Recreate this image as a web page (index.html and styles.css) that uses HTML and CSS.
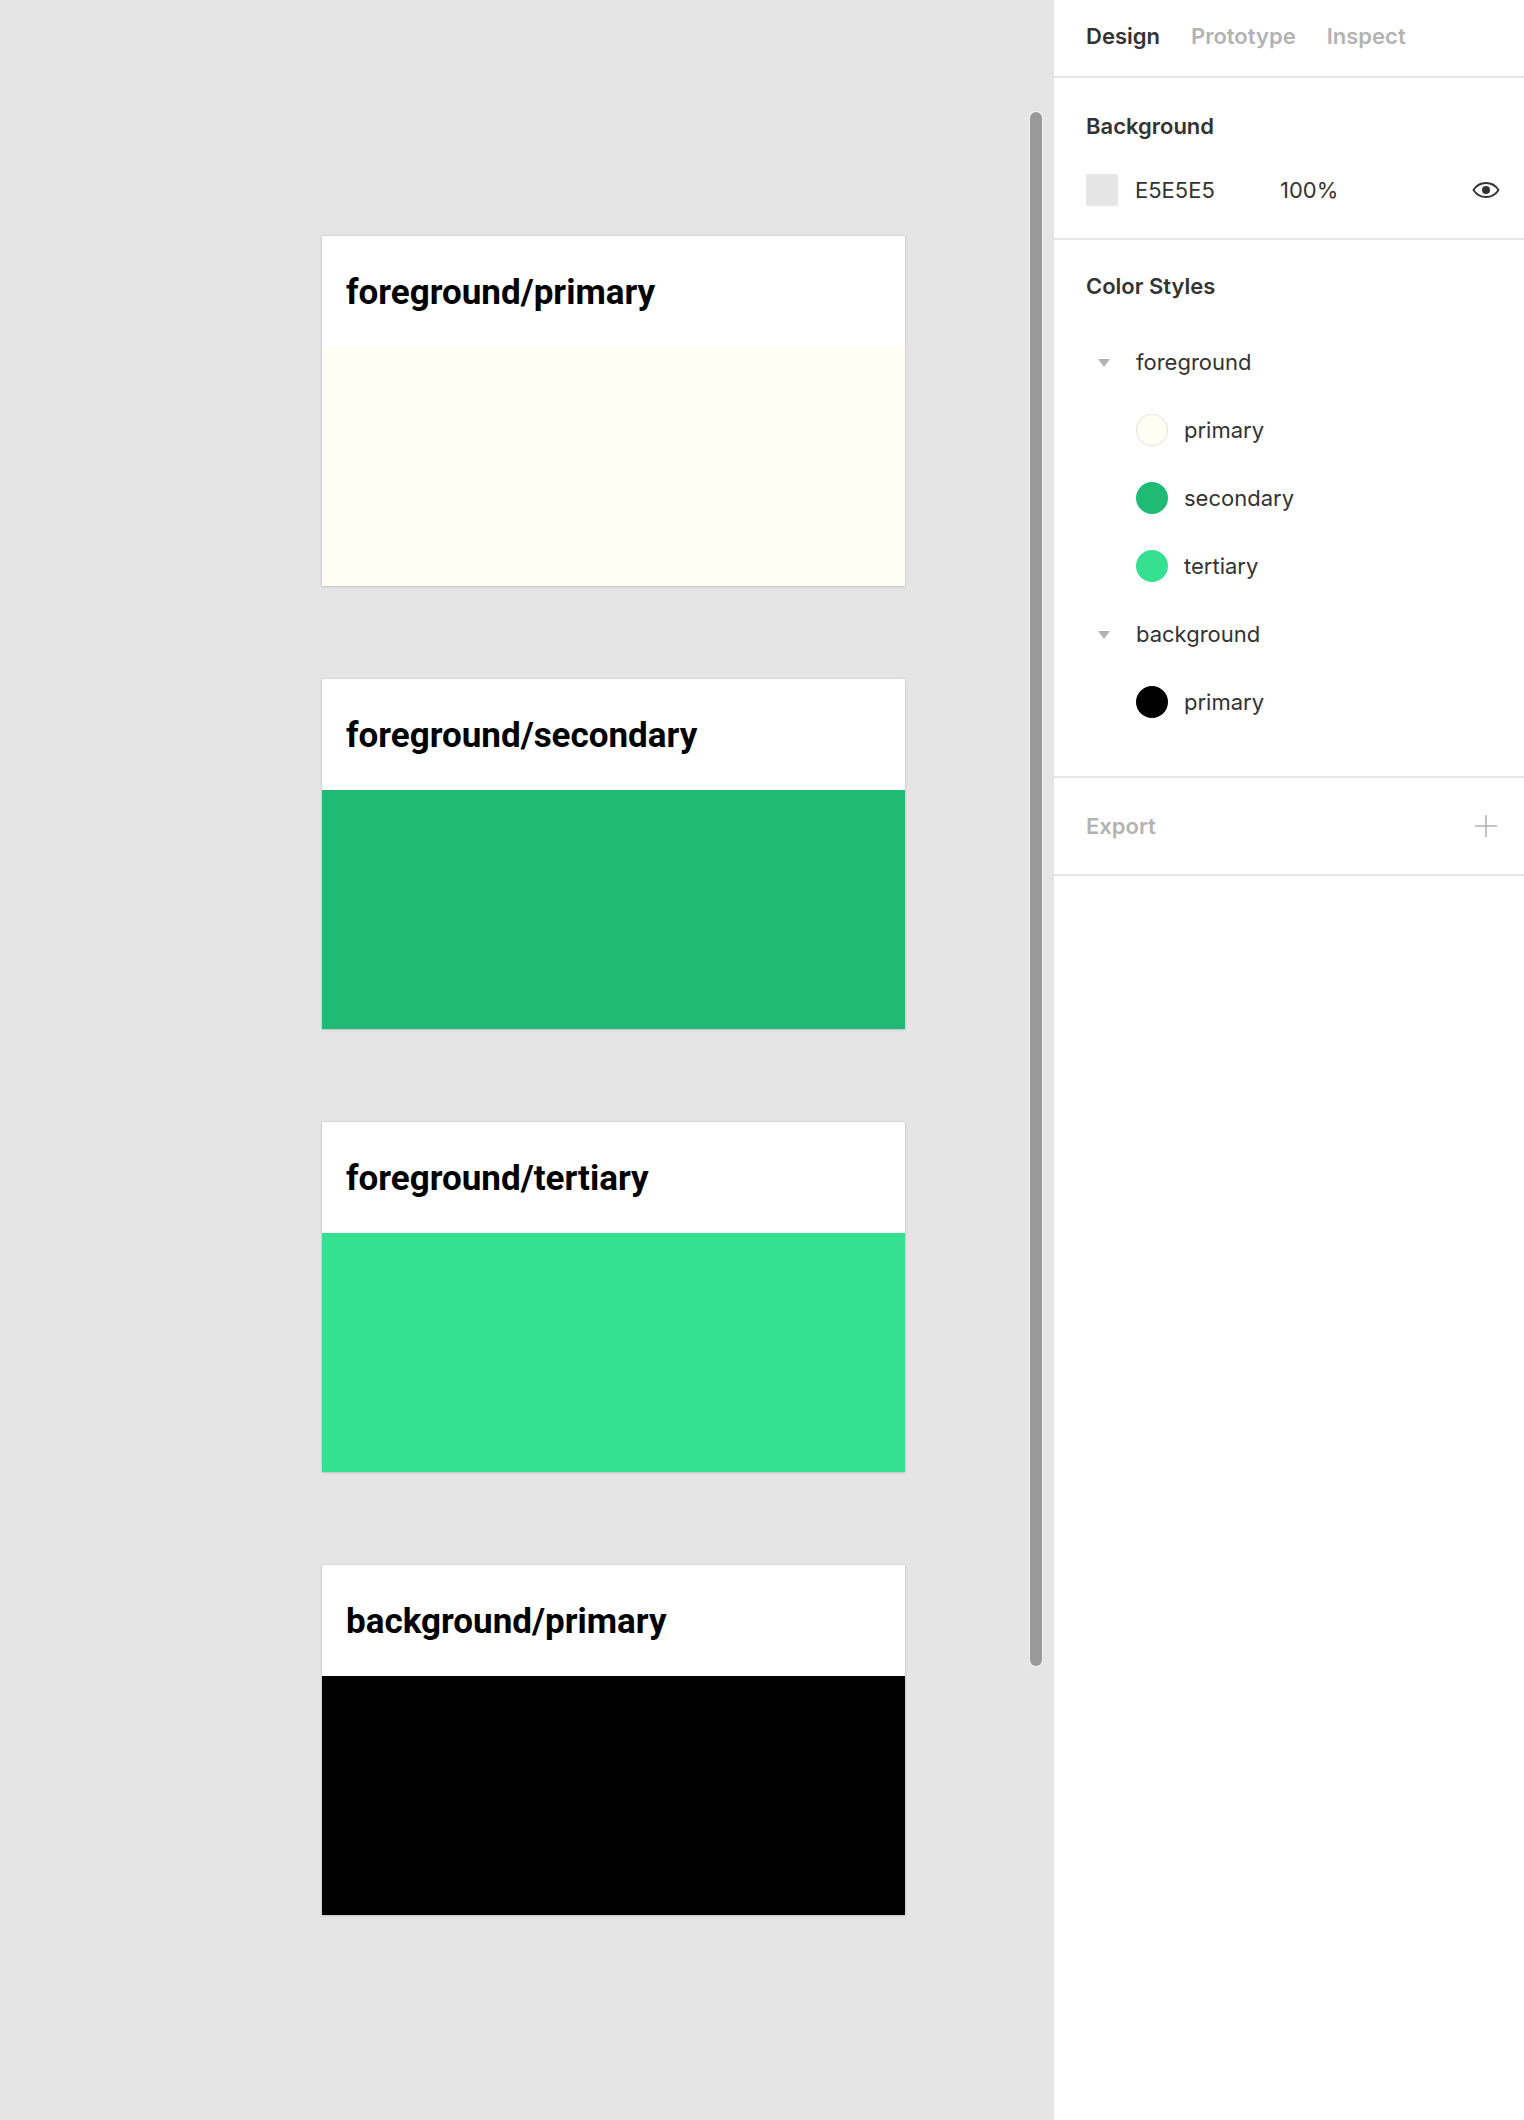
FILE: index.html
```html
<!DOCTYPE html>
<html lang="en">
<head>
<meta charset="utf-8">
<title>Color Styles</title>
<link rel="stylesheet" href="styles.css">
</head>
<body>
<div class="app">
  <main class="canvas">
    <div class="frames">
      <section class="card">
        <div class="card-title">foreground/primary</div>
        <div class="card-color c-fg-primary"></div>
      </section>
      <section class="card">
        <div class="card-title">foreground/secondary</div>
        <div class="card-color c-fg-secondary"></div>
      </section>
      <section class="card">
        <div class="card-title">foreground/tertiary</div>
        <div class="card-color c-fg-tertiary"></div>
      </section>
      <section class="card">
        <div class="card-title">background/primary</div>
        <div class="card-color c-bg-primary"></div>
      </section>
    </div>
    <div class="scrollbar"></div>
  </main>
  <aside class="panel">
    <nav class="tabs">
      <span class="tab active">Design</span>
      <span class="tab">Prototype</span>
      <span class="tab">Inspect</span>
    </nav>
    <div class="section bg-section">
      <div class="heading">Background</div>
      <div class="bg-row">
        <span class="swatch"></span>
        <span class="hex">E5E5E5</span>
        <span class="opacity">100%</span>
        <svg class="eye" width="28" height="16" viewBox="0 0 28 16" aria-hidden="true">
          <path d="M1.5 8 C5 2.3 9.5 1 14 1 C18.5 1 23 2.3 26.5 8 C23 13.7 18.5 15 14 15 C9.5 15 5 13.7 1.5 8 Z" fill="none" stroke="#333" stroke-width="1.8"/>
          <circle cx="14" cy="8" r="4" fill="#333"/>
        </svg>
      </div>
    </div>
    <div class="section styles-section">
      <div class="heading">Color Styles</div>
      <ul class="tree">
        <li class="group-row"><span class="caret"></span><span class="label">foreground</span></li>
        <li class="style-row"><span class="dot d-fg-primary"></span><span class="label">primary</span></li>
        <li class="style-row"><span class="dot d-fg-secondary"></span><span class="label">secondary</span></li>
        <li class="style-row"><span class="dot d-fg-tertiary"></span><span class="label">tertiary</span></li>
        <li class="group-row"><span class="caret"></span><span class="label">background</span></li>
        <li class="style-row"><span class="dot d-bg-primary"></span><span class="label">primary</span></li>
      </ul>
    </div>
    <div class="section export-section">
      <span class="export-label">Export</span>
      <svg class="plus" width="22" height="22" viewBox="0 0 22 22" aria-hidden="true">
        <path d="M11 0 V22 M0 11 H22" stroke="#b3b3b3" stroke-width="1.6"/>
      </svg>
    </div>
  </aside>
</div>
</body>
</html>
```
FILE: styles.css
```css
* { box-sizing: border-box; }

html, body {
  margin: 0;
  padding: 0;
}

body {
  width: 1524px;
  height: 2120px;
  overflow: hidden;
  background: #ffffff;
}

.app {
  display: flex;
  height: 2120px;
}

/* Canvas */
.canvas {
  position: relative;
  width: 1054px;
  flex: 0 0 1054px;
  height: 2120px;
  background: #e5e5e5;
}

.frames {
  display: flex;
  flex-direction: column;
  gap: 93px;
  padding: 236px 0 0 322px;
}

.card {
  width: 583px;
  height: 350px;
  background: #ffffff;
  display: flex;
  flex-direction: column;
  box-shadow: 0 0 0 1px rgba(0, 0, 0, 0.04), 0 1px 3px rgba(0, 0, 0, 0.12);
}

.card-title {
  height: 111px;
  flex: 0 0 111px;
  display: flex;
  align-items: center;
  padding-left: 24px;
  padding-top: 2px;
  font-family: Roboto, "Liberation Sans", sans-serif;
  font-weight: 700;
  font-size: 35px;
  line-height: 1;
  color: #000000;
}

.card-color {
  flex: 1;
}

.c-fg-primary { background: #fffff5; }
.c-fg-secondary { background: #1fba73; }
.c-fg-tertiary { background: #36e091; }
.c-bg-primary { background: #000000; }

.scrollbar {
  position: absolute;
  left: 1030px;
  top: 112px;
  width: 12px;
  height: 1554px;
  border-radius: 6px;
  background: #999999;
  box-shadow: 0 0 0 1px rgba(255, 255, 255, 0.55);
}

/* Panel */
.panel {
  flex: 1;
  background: #ffffff;
  font-family: Inter, "Noto Sans", sans-serif;
  font-size: 22px;
  line-height: 26px;
  color: #333333;
}

.tabs {
  height: 78px;
  display: flex;
  gap: 31px;
  padding: 23px 0 0 32px;
  border-bottom: 2px solid #e5e5e5;
}

.tab {
  font-weight: 600;
  color: #b3b3b3;
}

.tab.active {
  color: #333333;
}

.section {
  border-bottom: 2px solid #e5e5e5;
  padding-left: 32px;
}

.heading {
  font-weight: 600;
  color: #333333;
}

.bg-section {
  height: 162px;
  padding-top: 35px;
}

.bg-row {
  margin-top: 35px;
  height: 32px;
  display: flex;
  align-items: center;
}

.swatch {
  width: 32px;
  height: 32px;
  border-radius: 2px;
  background: #e5e5e5;
  flex: 0 0 32px;
}

.hex {
  margin-left: 17px;
  width: 145px;
}

.opacity {
  flex: 1;
}

.eye {
  margin-right: 24px;
  display: block;
}

.styles-section {
  height: 538px;
  padding-top: 33px;
}

.tree {
  list-style: none;
  margin: 29px 0 0 0;
  padding: 0;
}

.tree li {
  height: 68px;
  display: flex;
  align-items: center;
}

.group-row {
  padding-left: 12px;
}

.caret {
  width: 0;
  height: 0;
  border-left: 6px solid transparent;
  border-right: 6px solid transparent;
  border-top: 8px solid #b3b3b3;
  margin-right: 26px;
  margin-top: 2px;
}

.style-row {
  padding-left: 50px;
}

.dot {
  width: 32px;
  height: 32px;
  border-radius: 50%;
  margin-right: 16px;
  flex: 0 0 32px;
}

.d-fg-primary { background: #fffff5; box-shadow: inset 0 0 0 1px #e3e3d3; }
.d-fg-secondary { background: #1fba73; }
.d-fg-tertiary { background: #36e091; }
.d-bg-primary { background: #000000; }

.export-section {
  height: 98px;
  display: flex;
  align-items: center;
  justify-content: space-between;
  padding-right: 27px;
}

.export-label {
  font-weight: 600;
  color: #b3b3b3;
}

.plus {
  display: block;
}
```
